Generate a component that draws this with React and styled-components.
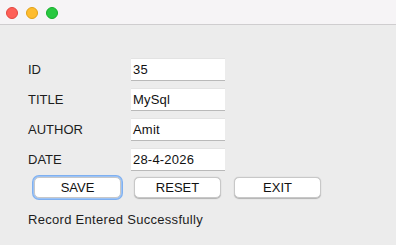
import React from 'react'
import styled, { createGlobalStyle } from 'styled-components'

const Global = createGlobalStyle`
  html, body {
    margin: 0;
    padding: 0;
    background: #ececec;
    font-family: "Liberation Sans", Arial, sans-serif;
  }
`

const Window = styled.div`
  width: 396px;
  height: 245px;
  background: #ececec;
  overflow: hidden;
`

const TitleBar = styled.div`
  height: 25px;
  background: #f6f4f6;
  border-bottom: 1px solid #cfcdcf;
  display: flex;
  align-items: center;
  gap: 8px;
  padding-left: 6px;
  padding-top: 1px;
  box-sizing: border-box;
`

const Light = styled.span`
  width: 12px;
  height: 12px;
  border-radius: 50%;
  box-sizing: border-box;
  background: ${p => p.color};
  border: 0.5px solid ${p => p.edge};
`

const Body = styled.div`
  padding: 33px 0 0 28px;
`

const Form = styled.div`
  display: grid;
  grid-template-columns: 103px 94px;
  row-gap: 7px;
  align-items: center;
`

const Label = styled.div`
  font-size: 13px;
  color: #1d1d1d;
`

const Field = styled.div`
  height: 23px;
  box-sizing: border-box;
  background: #ffffff;
  border-top: 1px solid #e3e3e3;
  border-bottom: 1px solid #b9b9b9;
  padding-left: 2px;
  font-size: 13px;
  line-height: 21px;
  color: #111;
  letter-spacing: 0.2px;
`

const Buttons = styled.div`
  display: flex;
  gap: 13px;
  margin: 6px 0 0 6px;
`

const Button = styled.div`
  width: 87px;
  height: 21px;
  box-sizing: border-box;
  background: #ffffff;
  border-radius: 5px;
  display: flex;
  align-items: center;
  justify-content: center;
  font-size: 13px;
  color: #111;
  border: 0.5px solid #c8c8c8;
  box-shadow: ${p => p.focused
    ? '0 0 0 1px #9dc3f5, 0 0 0 2px #7fb0f0'
    : '0 0.5px 1px rgba(0,0,0,0.25)'};
`

const Status = styled.div`
  margin-top: 14px;
  font-size: 13px;
  letter-spacing: 0.3px;
  color: #1d1d1d;
`

const rows = [
  ['ID', '35'],
  ['TITLE', 'MySql'],
  ['AUTHOR', 'Amit'],
  ['DATE', '28-4-2026'],
]

export default function App() {
  return (
    <Window>
      <Global />
      <TitleBar>
        <Light color="#fe5f57" edge="#e2463f" />
        <Light color="#febc2e" edge="#e1a116" />
        <Light color="#28c840" edge="#14ae2a" />
      </TitleBar>
      <Body>
        <Form>
          {rows.map(([label, value]) => (
            <React.Fragment key={label}>
              <Label>{label}</Label>
              <Field>{value}</Field>
            </React.Fragment>
          ))}
        </Form>
        <Buttons>
          <Button focused>SAVE</Button>
          <Button>RESET</Button>
          <Button>EXIT</Button>
        </Buttons>
        <Status>Record Entered Successfully</Status>
      </Body>
    </Window>
  )
}
